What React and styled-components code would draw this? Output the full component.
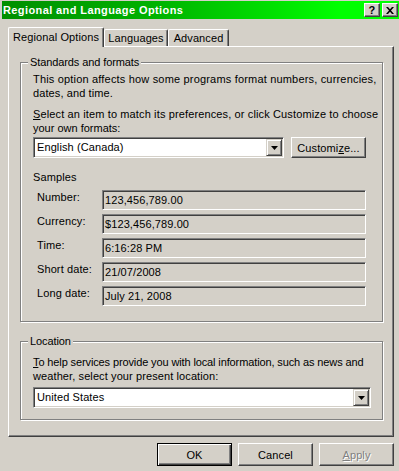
import React from 'react';
import styled, { createGlobalStyle } from 'styled-components';

const GlobalStyle = createGlobalStyle`
  html, body {
    margin: 0;
    padding: 0;
    background: #d4d0c8;
  }
  body {
    font-family: "Liberation Sans", Arial, sans-serif;
    font-size: 11px;
    letter-spacing: 0.1px;
    color: #000;
  }
`;

const Window = styled.div`
  width: 399px;
  height: 471px;
  box-sizing: border-box;
  padding: 1px 0 0 2px;
  display: flex;
  flex-direction: column;
`;

const TitleBar = styled.div`
  height: 18px;
  display: flex;
  align-items: center;
  padding: 0 1px 0 1px;
  background: linear-gradient(90deg, #008f00 0%, #00b400 40%, #00e000 68%, #00ff00 85%, #00ff00 100%);
`;

const TitleText = styled.span`
  flex: 1;
  color: #fff;
  font-weight: bold;
  font-size: 11px;
  letter-spacing: 0.4px;
`;

const CaptionButton = styled.div`
  box-sizing: border-box;
  width: 16px;
  height: 14px;
  margin-left: ${p => p.$gap || 0}px;
  display: flex;
  align-items: center;
  justify-content: center;
  background: #d4d0c8;
  border: 1px solid;
  border-color: #fff #404040 #404040 #fff;
  box-shadow: inset -1px -1px #808080;
  font-weight: bold;
  font-size: 11px;
  line-height: 12px;
`;

const Body = styled.div`
  flex: 1;
  padding: 8px 5px 0 6px;
  display: flex;
  flex-direction: column;
`;

const TabStrip = styled.div`
  display: flex;
  align-items: flex-end;
  height: 19px;
`;

const Tab = styled.div`
  box-sizing: border-box;
  position: relative;
  z-index: ${p => (p.$active ? 2 : 0)};
  width: ${p => p.$w}px;
  height: ${p => (p.$active ? 20 : 17)}px;
  margin-bottom: ${p => (p.$active ? -1 : 0)}px;
  padding-top: ${p => (p.$active ? 2 : 1)}px;
  background: #d4d0c8;
  border-top: 1px solid #fff;
  border-left: 1px solid #fff;
  border-right: 1px solid #404040;
  border-radius: 2px 2px 0 0;
  box-shadow: inset -1px 0 #808080;
  text-align: center;
  line-height: 14px;
  white-space: nowrap;
`;

const Panel = styled.div`
  box-sizing: border-box;
  height: 391px;
  border: 1px solid;
  border-color: #fff #404040 #404040 #fff;
  box-shadow: inset -1px -1px #808080;
  padding: 9px 10px 0 11px;
`;

const Group = styled.fieldset`
  margin: ${p => p.$top || 0}px 0 0 0;
  min-width: 0;
  padding: ${p => p.$pt}px 4px ${p => p.$pb}px 12px;
  border: 1px solid #808080;
  box-shadow: inset 1px 1px #fff, 1px 1px #fff;
`;

const Legend = styled.legend`
  margin-left: -5px;
  padding: 0 2px;
  background: #d4d0c8;
  line-height: 13px;
  letter-spacing: -0.1px;
`;

const Text = styled.div`
  margin: ${p => p.$mt || 0}px 0 0 0;
  line-height: 14px;
  white-space: nowrap;
`;

const Line = styled.span`
  display: block;
  letter-spacing: ${p => p.$ls || 0}px;
`;

const U = styled.span`
  text-decoration: underline;
`;

const Row = styled.div`
  display: flex;
  align-items: flex-start;
  gap: ${p => p.$gap || 0}px;
  margin-top: ${p => p.$mt || 0}px;
  padding-left: ${p => p.$pl || 0}px;
`;

const Combo = styled.div`
  box-sizing: border-box;
  width: ${p => p.$w}px;
  height: 21px;
  padding: 1px;
  display: flex;
  background: #fff;
  border: 1px solid;
  border-color: #808080 #fff #fff #808080;
  box-shadow: inset 1px 1px #404040, inset -1px -1px #d4d0c8;
`;

const ComboValue = styled.div`
  flex: 1;
  padding-left: 2px;
  line-height: 17px;
  white-space: nowrap;
`;

const DropButton = styled.div`
  box-sizing: border-box;
  width: 16px;
  height: 17px;
  display: flex;
  align-items: center;
  justify-content: center;
  background: #d4d0c8;
  border: 1px solid;
  border-color: #d4d0c8 #404040 #404040 #d4d0c8;
  box-shadow: inset 1px 1px #fff, inset -1px -1px #808080;
`;

const PushButton = styled.button`
  box-sizing: border-box;
  width: 75px;
  height: ${p => p.$h || 23}px;
  padding: 0;
  font: inherit;
  letter-spacing: inherit;
  background: #d4d0c8;
  color: ${p => (p.$disabled ? '#808080' : '#000')};
  text-shadow: ${p => (p.$disabled ? '1px 1px #fff' : 'none')};
  border: 1px solid;
  border-color: ${p => (p.$default ? '#000' : '#fff #404040 #404040 #fff')};
  box-shadow: ${p =>
    p.$default
      ? 'inset 1px 1px #fff, inset -1px -1px #404040, inset -2px -2px #808080'
      : 'inset -1px -1px #808080'};
`;

const SampleLabel = styled.div`
  width: 65px;
  line-height: 14px;
`;

const SampleField = styled.div`
  box-sizing: border-box;
  width: 264px;
  height: 20px;
  padding: 1px 2px 0;
  line-height: 16px;
  border: 1px solid;
  border-color: #808080 #fff #fff #808080;
  box-shadow: inset 1px 1px #404040;
  white-space: nowrap;
  overflow: hidden;
`;

const SampleList = styled.div`
  display: flex;
  flex-direction: column;
  gap: 4px;
  margin-top: 6px;
`;

const Footer = styled.div`
  display: flex;
  justify-content: flex-end;
  gap: 6px;
  margin-top: 6px;
`;

const Arrow = () => (
  <svg width="7" height="4" viewBox="0 0 7 4">
    <path d="M0 0h7L3.5 4z" fill="#000" />
  </svg>
);

const CloseGlyph = () => (
  <svg width="8" height="7" viewBox="0 0 8 7">
    <path d="M0 0h2l2 2.2L6 0h2L5 3.5 8 7H6L4 4.8 2 7H0l3-3.5z" fill="#000" />
  </svg>
);

const samples = [
  ['Number:', '123,456,789.00'],
  ['Currency:', '$123,456,789.00'],
  ['Time:', '6:16:28 PM'],
  ['Short date:', '21/07/2008'],
  ['Long date:', 'July 21, 2008'],
];

export default function App() {
  return (
    <>
      <GlobalStyle />
      <Window>
        <TitleBar>
          <TitleText>Regional and Language Options</TitleText>
          <CaptionButton>?</CaptionButton>
          <CaptionButton $gap={2}>
            <CloseGlyph />
          </CaptionButton>
        </TitleBar>
        <Body>
          <TabStrip>
            <Tab $active $w={96}>Regional Options</Tab>
            <Tab $w={64}>Languages</Tab>
            <Tab $w={61}>Advanced</Tab>
          </TabStrip>
          <Panel>
            <Group $pt={3} $pb={15}>
              <Legend>Standards and formats</Legend>
              <Text>
                <Line $ls={0.18}>This option affects how some programs format numbers, currencies,</Line>
                <Line $ls={0.1}>dates, and time.</Line>
              </Text>
              <Text $mt={7}>
                <Line $ls={0.13}>
                  <U>S</U>elect an item to match its preferences, or click Customize to choose
                </Line>
                <Line>your own formats:</Line>
              </Text>
              <Row $gap={7} $mt={2}>
                <Combo $w={251}>
                  <ComboValue>English (Canada)</ComboValue>
                  <DropButton>
                    <Arrow />
                  </DropButton>
                </Combo>
                <PushButton $h={21}>
                  Customi<U>z</U>e...
                </PushButton>
              </Row>
              <Text $mt={12}>Samples</Text>
              <SampleList>
                {samples.map(([label, value]) => (
                  <Row key={label} $pl={4}>
                    <SampleLabel>{label}</SampleLabel>
                    <SampleField>{value}</SampleField>
                  </Row>
                ))}
              </SampleList>
            </Group>
            <Group $top={13} $pt={7} $pb={11}>
              <Legend>Location</Legend>
              <Text>
                <Line $ls={-0.12}>
                  <U>T</U>o help services provide you with local information, such as news and
                </Line>
                <Line $ls={0.1}>weather, select your present location:</Line>
              </Text>
              <Row $mt={4}>
                <Combo $w={338}>
                  <ComboValue>United States</ComboValue>
                  <DropButton>
                    <Arrow />
                  </DropButton>
                </Combo>
              </Row>
            </Group>
          </Panel>
          <Footer>
            <PushButton $default>OK</PushButton>
            <PushButton>Cancel</PushButton>
            <PushButton $disabled>
              <U>A</U>pply
            </PushButton>
          </Footer>
        </Body>
      </Window>
    </>
  );
}
